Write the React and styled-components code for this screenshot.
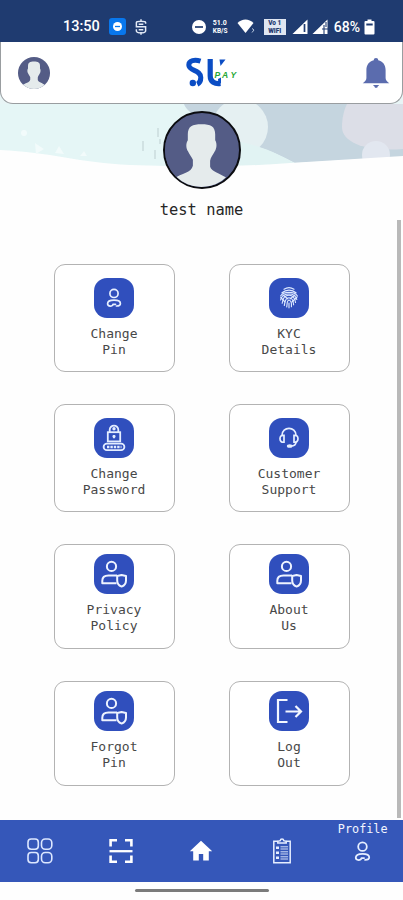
import React from "react"
import styled, { createGlobalStyle } from "styled-components"

const mono = `"DejaVu Sans Mono", "Liberation Mono", monospace`

function PersonIcon({ size = 20 }) {
  return (
    <svg width={size} height={size} viewBox="0 0 20 20" fill="none" stroke="#e6efff" strokeWidth="1.7" strokeLinecap="round">
      <circle cx="10" cy="5.4" r="4.1" />
      <path d="M9 16.3H11.5M9 16.3C9 18.6 3.6 19 3.6 15.8C3.6 12.6 6.5 12.2 10 12.2C13.5 12.2 16.4 12.6 16.4 15.5C16.4 17.5 14.6 18 12.5 18" />
    </svg>
  )
}

function FingerprintIcon() {
  return (
    <svg width="22" height="24" viewBox="0 0 22 24" fill="none" stroke="#dce8ff" strokeWidth="1.15" strokeLinecap="round">
      <path d="M6 3.3C9 1.3 13 1.3 16 3.3M4 6.8C8 3.2 14 3.2 18 6.8M2.6 10C5.5 5.2 16.5 5.2 19.4 10" />
      <path d="M2.6 14C4 6.8 16.5 5.5 18.8 13.5M4.2 17.2C4.5 14.5 6 9.3 11 9.3C15 9.3 17 12.5 17.5 16.5" />
      <path d="M6.3 19.5C7 17 6.6 11.8 11 11.8C15.3 11.8 15.5 16.5 15.6 18.8M8.7 21C9.4 18 8.6 14.2 11 14.2C13.5 14.2 13.6 18 13.4 20.7M11 17V21.8" />
      <path d="M2.8 11.5L7 16M19 11L14 16M5 9L10 13M17 9L12 13" />
    </svg>
  )
}

function LockIcon() {
  return (
    <svg width="24" height="28" viewBox="0 0 24 28" fill="none" stroke="#e3edff" strokeWidth="1.8">
      <path d="M7.7 8V5.8C7.7 0.3 16.3 0.3 16.3 5.8V8" />
      <rect x="5.8" y="8.2" width="12.4" height="9.2" />
      <circle cx="12" cy="4.8" r="0.8" fill="#e3edff" />
      <path d="M10.5 12.4H13.5M12 11V14.3" strokeWidth="1.9" />
      <rect x="1.6" y="19.6" width="20.8" height="6.6" rx="3.3" />
      <path d="M5 23H19.5" strokeDasharray="2.4 1" strokeWidth="2.4" />
    </svg>
  )
}

function HeadsetIcon() {
  return (
    <svg width="22" height="24" viewBox="0 0 22 24" fill="none" stroke="#e6efff" strokeWidth="1.7" strokeLinecap="round">
      <path d="M4 9.5C4 0 18 0 18 9.5" />
      <path d="M6 9.3C3.5 9 2 10.2 2 12.7C2 15.2 3.5 16.5 6 16.2ZM16 9.3C18.5 9 20 10.2 20 12.7C20 15.2 18.5 16.5 16 16.2Z" />
      <path d="M18 16.2C17.8 18.8 15.5 20 13 20" />
      <ellipse cx="11.7" cy="20" rx="2" ry="1" fill="#e6efff" />
    </svg>
  )
}

function UserShieldIcon() {
  return (
    <svg width="28" height="28" viewBox="0 0 28 28" fill="none" stroke="#eef3ff" strokeWidth="2" strokeLinejoin="round">
      <circle cx="11.5" cy="6.4" r="4.6" />
      <path d="M16.5 23.2H2.3V20.8C2.3 17.3 4.8 15.5 8.5 15.5H17" />
      <path d="M17.2 15.9L21.6 14.9L26 15.9V20.5C26 24 24 25.7 21.6 26.6C19.2 25.7 17.2 24 17.2 20.5Z" />
    </svg>
  )
}

function LogoutIcon() {
  return (
    <svg width="28" height="28" viewBox="0 0 28 28" fill="none" stroke="#f3f7ff" strokeWidth="2.2">
      <path d="M12.5 3H3V25H12.5M10.5 14.5H26M20.5 9L26 14.5L20.5 20" />
    </svg>
  )
}

function GridIcon() {
  return (
    <svg width="26" height="26" viewBox="0 0 26 26" fill="none" stroke="#dce7ff" strokeWidth="1.6">
      <rect x="1" y="1" width="10.3" height="10.3" rx="3.2" />
      <rect x="14.5" y="1" width="10.3" height="10.3" rx="3.7" />
      <rect x="1" y="14.5" width="10.3" height="10.3" rx="3.2" />
      <rect x="14.5" y="14.5" width="10.3" height="10.3" rx="3.7" />
    </svg>
  )
}

function ScanIcon() {
  return (
    <svg width="24" height="26" viewBox="0 0 24 26" fill="none" stroke="#fff" strokeWidth="2.6">
      <path d="M1.6 8.5V2.3H8M16 2.3H22.4V8.5M1.6 17.5V23.7H8M16 23.7H22.4V17.5" />
      <path d="M0.5 13.2H23.5" strokeWidth="2.3" />
    </svg>
  )
}

function HomeIcon() {
  return (
    <svg width="24" height="22" viewBox="0 0 24 22" fill="#fff">
      <path d="M12 0.8L23.2 11.2H19.8V20.5H14.2V14H9.8V20.5H4.2V11.2H0.8Z" />
    </svg>
  )
}

function ClipboardIcon() {
  return (
    <svg width="20" height="26" viewBox="0 0 20 26" fill="none" stroke="#e6eeff" strokeWidth="1.5">
      <path d="M6 3.2H1.8V24.8H18.2V3.2H14M5.8 5V3.3L8.2 2.6C8.5 0.4 11.5 0.4 11.8 2.6L14.2 3.3V5Z" />
      <path d="M4 9.8H7M4 14.8H7M4 19.8H7" strokeWidth="2.6" />
      <path d="M8.5 8.8H16M8.5 11H16M8.5 13.8H16M8.5 16H16M8.5 18.8H16M8.5 21H16" strokeWidth="0.9" />
    </svg>
  )
}

function BellIcon() {
  return (
    <svg width="28" height="32" viewBox="0 0 28 32" fill="#5b6cae">
      <path d="M14 1C15.4 1 16.2 1.8 16.2 3.3C20.8 4.3 23.6 8 23.6 13V21C23.6 23.3 25 24.5 27.3 26.2H0.7C3 24.5 4.4 23.3 4.4 21V13C4.4 8 7.2 4.3 11.8 3.3C11.8 1.8 12.6 1 14 1Z" />
      <path d="M11 28H17.2C17 29 15.4 29 15.2 30.8H13C12.8 29 11.2 29 11 28Z" />
    </svg>
  )
}

function Avatar({ size, id }) {
  return (
    <svg width={size} height={size} viewBox="0 0 72 72">
      <clipPath id={id}>
        <circle cx="36" cy="36" r="36" />
      </clipPath>
      <g clipPath={`url(#${id})`}>
        <rect width="72" height="72" fill="#545c86" />
        <path
          fill="#e5ebec"
          d="M36 10C45 10 49.5 12 49.5 20V26C51.5 29 51 34 49 37C47.5 40 45 43 44.5 46V52C46 57 54 58 62 64V73H8V64C17 58 26 58 27.5 51V45C26 42 24 40 22.8 37C20.5 34 20.5 29 22.5 26V20C22.5 12 27 10 36 10Z"
        />
      </g>
    </svg>
  )
}

function Logo() {
  return (
    <svg width="54" height="34" viewBox="0 0 54 34" fill="none">
      <path d="M15.5 5.2C10 3.4 3.8 4.2 3.8 9C3.8 15.5 15.8 13.2 15.8 21.5C15.8 25.5 14.5 27.2 12.3 28.2" stroke="#0b4dc4" strokeWidth="5" />
      <circle cx="7.8" cy="27" r="3.2" fill="#0b4dc4" />
      <path d="M25.2 3V20C25.2 26 30 28.3 35.5 27.5" stroke="#0b4dc4" strokeWidth="5.2" />
      <path d="M34.5 3.5H40.5L35.5 10Z" fill="#0b4dc4" />
      <path d="M33 23L36 21.5V27L33.5 29Z" fill="#0b4dc4" />
      <LogoText x="29.5" y="21.5">P</LogoText>
      <LogoText x="37" y="21.5">A</LogoText>
      <LogoText x="45.5" y="21.5">Y</LogoText>
    </svg>
  )
}

function Banner() {
  return (
    <BannerArt viewBox="0 0 403 70" preserveAspectRatio="none">
      <path fill="#e5f6f6" d="M0 0H403V56L290 60C240 65 190 66 130 63C80 62 50 50 0 49Z" />
      <path fill="#c5d5df" d="M184 0H403V53L295 59C275 48 255 41 235 37C212 18 188 12 184 0Z" />
      <circle cx="240" cy="23" r="28" fill="#e5f0f2" />
      <path fill="#e1f3f3" d="M235 37C260 41 280 51 296 60C275 63 245 63 220 62V37Z" />
      <path fill="#dcdee7" d="M347 0H403V45C370 48 342 40 342 23C342 14 344 6 347 0Z" />
      <circle cx="376" cy="51" r="14" fill="#e2e7f0" />
      <path fill="#fefefe" d="M403 52L290 59C240 63 190 63 130 61C80 59 50 48 0 46V70H403Z" />
      <g fill="#f2fbfb">
        <circle cx="24" cy="29" r="3" />
        <path d="M35 39L44 45L36 50ZM55 49L59 42L64 50ZM80 52L84 47L87 52Z" />
      </g>
      <path stroke="#d1e2e3" strokeWidth="2" d="M143 37V47M158 24V33M155 46V55M160 35V40" />
    </BannerArt>
  )
}

const rows = [
  {
    tall: true,
    items: [
      { label: ["Change", "Pin"], icon: <PersonIcon /> },
      { label: ["KYC", "Details"], icon: <FingerprintIcon /> },
    ],
  },
  {
    tall: true,
    items: [
      { label: ["Change", "Password"], icon: <LockIcon /> },
      { label: ["Customer", "Support"], icon: <HeadsetIcon /> },
    ],
  },
  {
    items: [
      { label: ["Privacy", "Policy"], icon: <UserShieldIcon /> },
      { label: ["About", "Us"], icon: <UserShieldIcon /> },
    ],
  },
  {
    items: [
      { label: ["Forgot", "Pin"], icon: <UserShieldIcon /> },
      { label: ["Log", "Out"], icon: <LogoutIcon /> },
    ],
  },
]

function StatusIcons() {
  return (
    <>
      <Clock>13:50</Clock>
      <AppBadge>
        <svg width="9" height="9" viewBox="0 0 9 9">
          <circle cx="4.5" cy="4.5" r="4.5" fill="#fff" />
          <path d="M2 4.5H7" stroke="#0877ed" strokeWidth="1.3" />
        </svg>
      </AppBadge>
      <svg width="12" height="16" viewBox="0 0 13 17" fill="none" stroke="#e4ebf7" strokeWidth="1.6">
        <path d="M11.5 5V3.5C11 2 2 2 1.5 3.5V8.2H11.5V13C10.8 15.5 2.2 15.5 1.5 13V11M6.5 0V3M6.5 14V17M4 5.5H9M4 11.5H9" />
      </svg>
      <Spacer />
      <svg width="14" height="14" viewBox="0 0 14 14">
        <circle cx="7" cy="7" r="7" fill="#fff" />
        <path d="M3 7H11" stroke="#1f3b70" strokeWidth="1.7" />
      </svg>
      <Speed>
        <span>51.0</span>
        <span>KB/S</span>
      </Speed>
      <Wifi width="18" height="15" viewBox="0 0 18 15" fill="#fff">
        <path d="M0.5 4C5 -0.8 12 -0.8 16.5 4L8.5 14Z" />
        <path d="M15 9.5L17 11L15 13.5" stroke="#b9c8df" fill="none" />
      </Wifi>
      <VoWifi>
        <span>Vo 1</span>
        <span>WIFI</span>
      </VoWifi>
      <Signal width="17" height="16" viewBox="0 0 17 16">
        <path d="M0.5 15L15.5 0.5V15Z" fill="#fff" />
        <path d="M12.5 5V13" stroke="#1f3b70" strokeWidth="1.7" />
      </Signal>
      <Signal width="17" height="16" viewBox="0 0 17 16">
        <path d="M0.5 15L15.5 0.5V15Z" fill="#fff" />
        <path d="M10 10H16M12 6V15M14 3V8" stroke="#1f3b70" strokeWidth="1.1" />
      </Signal>
      <Battery>68%</Battery>
      <svg width="11" height="16" viewBox="0 0 11 16">
        <path d="M3.5 0.5H7.5V2H9.5Q10.5 2 10.5 3V14.5Q10.5 15.5 9.5 15.5H1.5Q0.5 15.5 0.5 14.5V3Q0.5 2 1.5 2H3.5Z" fill="#fff" />
        <path d="M2.3 5.5H8.7" stroke="#1f3b70" strokeWidth="2" />
      </svg>
    </>
  )
}

function App() {
  return (
    <Screen>
      <GlobalStyle />
      <StatusBar>
        <StatusIcons />
      </StatusBar>
      <HeaderBack>
        <Header>
          <Avatar size={32} id="header-avatar" />
          <Logo />
          <BellIcon />
        </Header>
      </HeaderBack>
      <Profile>
        <Banner />
        <AvatarRing>
          <Avatar size={73} id="profile-avatar" />
        </AvatarRing>
        <Name>test name</Name>
      </Profile>
      <Main>
        <Menu>
          {rows.map((row, i) => (
            <Row key={i}>
              {row.items.map(item => (
                <Card key={item.label.join(" ")} $tall={row.tall}>
                  <Tile>{item.icon}</Tile>
                  <Label>
                    {item.label[0]}
                    <br />
                    {item.label[1]}
                  </Label>
                </Card>
              ))}
            </Row>
          ))}
        </Menu>
        <Scrollbar />
      </Main>
      <NavBar>
        <NavItem><GridIcon /></NavItem>
        <NavItem><ScanIcon /></NavItem>
        <NavItem><HomeIcon /></NavItem>
        <NavItem><ClipboardIcon /></NavItem>
        <NavItem>
          <NavLabel>Profile</NavLabel>
          <PersonIcon size={21} />
        </NavItem>
      </NavBar>
      <Gesture>
        <Pill />
      </Gesture>
    </Screen>
  )
}

const GlobalStyle = createGlobalStyle`
  * {
    box-sizing: border-box;
  }

  body {
    margin: 0;
    background: #fff;
  }

  svg {
    display: block;
    flex-shrink: 0;
  }
`

const Screen = styled.div`
  display: flex;
  flex-direction: column;
  width: 403px;
  height: 900px;
  overflow: hidden;
  background: #fefefe;
  font-family: ${mono};
`

const StatusBar = styled.div`
  display: flex;
  align-items: center;
  flex-shrink: 0;
  height: 42px;
  padding: 11px 28px 0 63px;
  background: #1f3b70;
  color: #fff;
  font-family: Roboto, sans-serif;
`

const Clock = styled.span`
  width: 46px;
  font-size: 14.5px;
  font-weight: 500;
`

const AppBadge = styled.span`
  display: flex;
  align-items: center;
  justify-content: center;
  width: 17px;
  height: 17px;
  margin-right: 9px;
  border-radius: 3px;
  background: #0877ed;
`

const Spacer = styled.div`
  flex: 1;
`

const Speed = styled.span`
  display: flex;
  flex-direction: column;
  width: 18px;
  margin-left: 7px;
  font-size: 7px;
  font-weight: 700;
  line-height: 8px;

  span:last-child {
    font-size: 6.5px;
  }
`

const Wifi = styled.svg`
  margin-left: 6px;
`

const VoWifi = styled.span`
  display: flex;
  flex-direction: column;
  width: 22px;
  height: 16px;
  margin-left: 9px;
  background: #dfe6f2;
  color: #1f3b70;
  font-size: 6.5px;
  font-weight: 900;
  line-height: 8px;
  text-align: center;
`

const Signal = styled.svg`
  margin-left: 6px;

  & + & {
    margin-left: 3px;
  }
`

const Battery = styled.span`
  margin: 0 4px 0 5px;
  font-size: 14px;
  font-weight: 500;
`

const HeaderBack = styled.div`
  flex-shrink: 0;
  background: #e8f5f6;
`

const Header = styled.header`
  display: flex;
  align-items: center;
  justify-content: space-between;
  height: 62px;
  padding: 0 12px 0 17px;
  border: 1.5px solid #999da0;
  border-top: 0;
  border-radius: 0 0 13px 13px;
  background: #fff;

  svg:nth-child(2) {
    margin-left: 11px;
  }
`

const LogoText = styled.text`
  fill: #27a836;
  font-family: "Liberation Sans", sans-serif;
  font-size: 8.5px;
  font-weight: 700;
  font-style: italic;
`

const Profile = styled.section`
  position: relative;
  display: flex;
  flex-direction: column;
  align-items: center;
  flex-shrink: 0;
  height: 116px;
  padding-top: 7px;
`

const BannerArt = styled.svg`
  position: absolute;
  top: 0;
  left: 0;
  width: 100%;
  height: 70px;
`

const AvatarRing = styled.div`
  position: relative;
  display: flex;
  align-items: center;
  justify-content: center;
  width: 78px;
  height: 78px;
  border: 2.5px solid #0b0c10;
  border-radius: 50%;
  background: #545c86;
`

const Name = styled.div`
  margin-top: 11px;
  color: #262626;
  font-size: 15.4px;
  line-height: 20px;
`

const Main = styled.main`
  display: flex;
  justify-content: space-between;
  flex-shrink: 0;
  height: 600px;
  padding-right: 2px;
`

const Menu = styled.div`
  padding: 44px 0 0 54px;
`

const Row = styled.div`
  display: flex;
  gap: 54px;
  margin-bottom: 32px;
`

const Card = styled.div`
  display: flex;
  flex-direction: column;
  align-items: center;
  width: 121px;
  height: ${props => (props.$tall ? 108 : 105)}px;
  padding: ${props => (props.$tall ? 13 : 9)}px 1px 0 0;
  border: 1px solid #b3b3b3;
  border-radius: 11px;
  background: #fff;
`

const Tile = styled.div`
  display: flex;
  align-items: center;
  justify-content: center;
  flex-shrink: 0;
  width: 40px;
  height: 40px;
  border-radius: 13px;
  background: #304fbd;
`

const Label = styled.div`
  margin-top: 8px;
  color: #484848;
  font-size: 13px;
  line-height: 16px;
  text-align: center;
`

const Scrollbar = styled.div`
  width: 4px;
  height: 598px;
  background: #b9b9b9;
`

const NavBar = styled.nav`
  display: grid;
  grid-template-columns: repeat(5, 1fr);
  flex-shrink: 0;
  height: 62px;
  background: #3557b9;
`

const NavItem = styled.div`
  position: relative;
  display: flex;
  align-items: center;
  justify-content: center;
`

const NavLabel = styled.span`
  position: absolute;
  top: 2px;
  color: #f3f6ff;
  font-size: 11.8px;
  line-height: 14px;
`

const Gesture = styled.div`
  display: flex;
  justify-content: center;
  padding-top: 7px;
`

const Pill = styled.div`
  width: 134px;
  height: 3px;
  border-radius: 2px;
  background: #7b7b7b;
`

export default App
